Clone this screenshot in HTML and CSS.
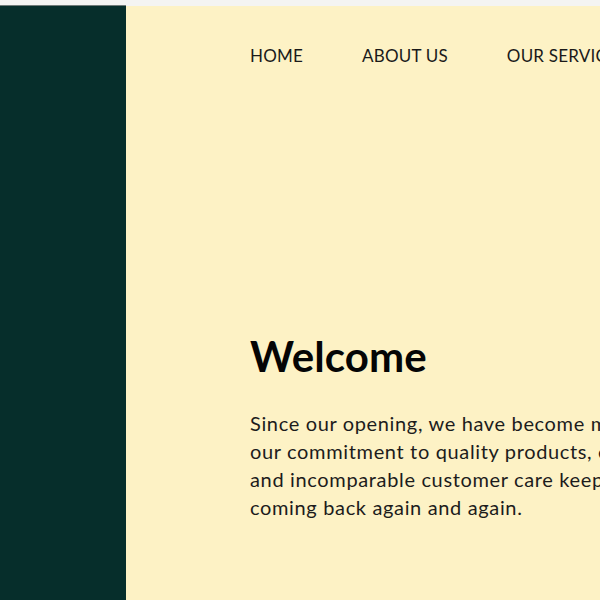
FILE: index.html
```html
<!DOCTYPE html>
<html>
<head>
<meta charset="utf-8">
<link rel="stylesheet" href="styles.css">
</head>
<body>
<div class="topbar"></div>
<div class="layout">
  <aside class="sidebar"></aside>
  <main class="main">
    <nav class="nav">
      <a class="nav-item">HOME</a>
      <a class="nav-item">ABOUT US</a>
      <a class="nav-item">OUR SERVICES</a>
      <a class="nav-item">CONTACT</a>
    </nav>
    <section class="hero">
      <h1 class="title">Welcome</h1>
      <p class="text">
        <span class="line">Since our opening, we have become many locals' favorite spot,</span>
        <span class="line">our commitment to quality products, excellent service</span>
        <span class="line">and incomparable customer care keeps our customers</span>
        <span class="line">coming back again and again.</span>
      </p>
    </section>
  </main>
</div>
</body>
</html>
```
FILE: styles.css
```css
html, body {
  margin: 0;
  padding: 0;
  overflow: hidden;
  width: 600px;
  height: 600px;
}
body {
  background: #fdf2c5;
  font-family: Lato, "Noto Sans", sans-serif;
  color: #111;
}
.topbar {
  height: 6px;
  background: #f4f4f2;
}
.layout {
  display: flex;
  height: 594px;
}
.sidebar {
  flex: 0 0 126px;
  background: #062e2b;
  border-top: 1px solid #6f7a78;
  margin-top: -1px;
}
.main {
  flex: 1 0 auto;
  padding-left: 124px;
  padding-top: 39px;
  white-space: nowrap;
}
.nav {
  display: flex;
  gap: 59px;
  font-size: 17px;
  line-height: 22px;
  color: #1a1a1a;
}
.nav-item {
  letter-spacing: 0.2px;
}
.hero {
  padding-top: 265px;
}
.title {
  margin: 0;
  font-size: 42px;
  line-height: 48px;
  font-weight: 700;
  color: #050505;
  letter-spacing: 0.1px;
}
.text {
  margin: 29px 0 0;
  font-size: 20px;
  line-height: 28px;
  color: #1c1c1c;
  letter-spacing: 0.65px;
}
.line {
  display: block;
}
```
